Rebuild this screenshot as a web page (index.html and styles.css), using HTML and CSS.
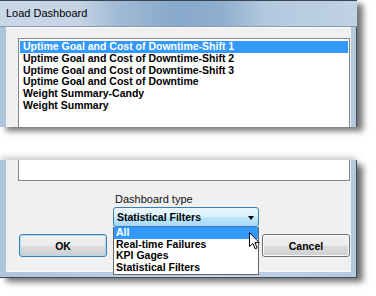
FILE: index.html
```html
<!DOCTYPE html>
<html>
<head>
<meta charset="utf-8">
<link rel="stylesheet" href="styles.css">
</head>
<body>
<div class="page">
  <section class="piece piece-top">
    <div class="titlebar">Load Dashboard</div>
    <div class="frame">
      <div class="client client-top">
        <ul class="listbox listbox-top">
          <li class="sel">Uptime Goal and Cost of Downtime-Shift 1</li>
          <li>Uptime Goal and Cost of Downtime-Shift 2</li>
          <li>Uptime Goal and Cost of Downtime-Shift 3</li>
          <li>Uptime Goal and Cost of Downtime</li>
          <li>Weight Summary-Candy</li>
          <li>Weight Summary</li>
        </ul>
      </div>
    </div>
  </section>
  <section class="piece piece-bottom">
    <div class="frame frame-bottom">
      <div class="client client-bottom">
        <div class="listbox listbox-tail"></div>
        <div class="controls">
          <div class="combo-col">
            <div class="combo-label">Dashboard type</div>
            <div class="combo">
              <span class="combo-text">Statistical Filters</span>
              <span class="arrow"></span>
              <ul class="droplist">
                <li class="sel">All</li>
                <li>Real-time Failures</li>
                <li>KPI Gages</li>
                <li>Statistical Filters</li>
              </ul>
              <svg class="cursor" width="11" height="18" viewBox="0 0 11 18">
                <path d="M0.5 0.5 L0.5 14.5 L3.8 11.4 L6.2 16.8 L8.2 15.9 L5.9 10.6 L10.2 10.6 Z" fill="#fff" stroke="#000" stroke-width="1" stroke-linejoin="round"/>
              </svg>
            </div>
          </div>
          <button class="btn btn-ok">OK</button>
          <button class="btn btn-cancel">Cancel</button>
        </div>
      </div>
    </div>
  </section>
</div>
</body>
</html>
```
FILE: styles.css
```css
* { box-sizing: border-box; }
html, body {
  margin: 0;
  padding: 0;
  background: #ffffff;
  width: 376px;
  height: 296px;
  overflow: hidden;
  font-family: "Liberation Sans", Arial, sans-serif;
}
.page {
  display: flex;
  flex-direction: column;
  gap: 33px;
}
.piece {
  width: 357px;
  display: flex;
  flex-direction: column;
  background: #b6cadf;
}
.piece-top {
  height: 127px;
  box-shadow: 6px 4px 6px rgba(0, 0, 0, 0.55);
}
.piece-bottom {
  height: 117px;
  box-shadow: 6px 5px 6px rgba(0, 0, 0, 0.55), 0 -3px 6px rgba(0, 0, 0, 0.18);
}
.titlebar {
  height: 27px;
  border-top: 1px solid #3a4653;
  border-bottom: 1px solid #8a9bb0;
  background: linear-gradient(90deg, #c9d7e6 0%, #c5d4e4 22%, #a3bdd7 32%, #86a8ca 50%, #90afcf 62%, #b3c9df 75%, #bfd2e6 100%);
  padding-left: 6px;
  font-size: 11px;
  line-height: 24px;
  color: #000;
}
.frame {
  flex: 1;
  display: flex;
  padding: 0 5px 0 6px;
  border-right: 1px solid #3f4b58;
  background: linear-gradient(90deg, #aec4db, #c3d5e7 60%, #b4c9de);
}
.frame-bottom {
  padding-bottom: 5px;
  border-bottom: 1px solid #3f4b58;
}
.client {
  flex: 1;
  background: #f0f0f0;
}
.client-top {
  padding: 10px 1px 0 12px;
  border-top: 1px solid #fbfbfb;
}
.client-bottom {
  padding: 0 1px 14px 12px;
  border-bottom: 1px solid #fafafa;
}
.listbox {
  list-style: none;
  margin: 0;
  background: #fff;
  border: 1px solid #828790;
}
.listbox-top {
  height: 100%;
  border-bottom: none;
  padding: 2px 1px 0 1px;
  font-size: 10.5px;
  font-weight: bold;
  line-height: 11.7px;
}
.listbox-top li {
  padding-left: 3px;
  white-space: nowrap;
  color: #000;
}
.listbox-top li.sel {
  background: #3399ff;
  color: #fff;
  height: 12px;
}
.listbox-tail {
  height: 21px;
  border-top: none;
}
.controls {
  margin-top: 12px;
  padding-left: 1px;
  display: grid;
  grid-template-columns: 94px 149px 88px;
  grid-template-rows: auto 23px;
  row-gap: 7px;
}
.combo-col {
  grid-column: 2;
  grid-row: 1;
  width: 146px;
  display: flex;
  flex-direction: column;
  gap: 1px;
}
.combo-label {
  padding-left: 2px;
  font-size: 11px;
  line-height: 13px;
  color: #111;
}
.combo {
  position: relative;
  height: 20px;
  border: 1px solid #3c7fb1;
  border-radius: 3px;
  background: linear-gradient(#eaf6fd 0%, #d9f0fc 50%, #bee6fd 51%, #a7d9f5 100%);
  display: flex;
  align-items: center;
  justify-content: space-between;
  padding: 0 4px 0 3px;
  font-size: 10.5px;
  font-weight: bold;
  color: #000;
}
.arrow {
  width: 0;
  height: 0;
  border-left: 3.5px solid transparent;
  border-right: 3.5px solid transparent;
  border-top: 4px solid #000;
  margin-top: 1px;
}
.droplist {
  position: absolute;
  left: -1px;
  top: calc(100% + 1px);
  width: 146px;
  margin: 0;
  padding: 0;
  list-style: none;
  background: #fff;
  border: 1px solid #646464;
  border-top: none;
  font-size: 10.5px;
  font-weight: bold;
  line-height: 11.7px;
  z-index: 2;
}
.droplist li {
  padding-left: 2px;
  white-space: nowrap;
}
.droplist li.sel {
  background: #3399ff;
  color: #fff;
}
.cursor {
  position: absolute;
  left: 135px;
  top: 24px;
  z-index: 3;
}
.btn {
  grid-row: 2;
  width: 88px;
  height: 23px;
  margin: 0;
  padding: 0;
  border-radius: 3px;
  background: linear-gradient(#f2f2f2 0%, #ebebeb 50%, #dddddd 51%, #cfcfcf 100%);
  font-family: "Liberation Sans", Arial, sans-serif;
  font-size: 10.5px;
  font-weight: bold;
  color: #000;
}
.btn-ok {
  grid-column: 1;
  border: 1px solid #3c7fb1;
  box-shadow: inset 0 0 0 1px #a9dcf6;
}
.btn-cancel {
  grid-column: 3;
  border: 1px solid #707070;
  box-shadow: inset 0 0 0 1px #fcfcfc;
}
```
